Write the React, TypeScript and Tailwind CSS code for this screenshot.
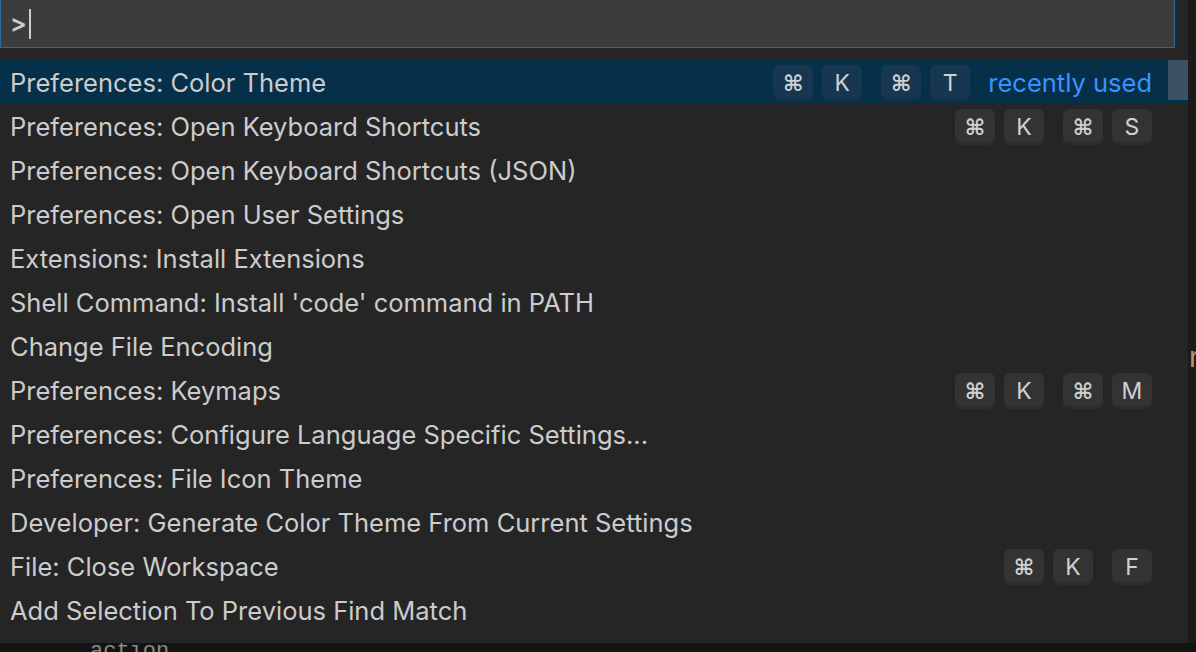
import React from "react";

type Item = {
  label: string;
  keys?: string[][];
  note?: string;
};

const items: Item[] = [
  { label: "Preferences: Color Theme", keys: [["⌘", "K"], ["⌘", "T"]], note: "recently used" },
  { label: "Preferences: Open Keyboard Shortcuts", keys: [["⌘", "K"], ["⌘", "S"]] },
  { label: "Preferences: Open Keyboard Shortcuts (JSON)" },
  { label: "Preferences: Open User Settings" },
  { label: "Extensions: Install Extensions" },
  { label: "Shell Command: Install 'code' command in PATH" },
  { label: "Change File Encoding" },
  { label: "Preferences: Keymaps", keys: [["⌘", "K"], ["⌘", "M"]] },
  { label: "Preferences: Configure Language Specific Settings..." },
  { label: "Preferences: File Icon Theme" },
  { label: "Developer: Generate Color Theme From Current Settings" },
  { label: "File: Close Workspace", keys: [["⌘", "K"], ["F"]] },
  { label: "Add Selection To Previous Find Match" },
];

function Key({ k, active }: { k: string; active: boolean }) {
  const sym = k === "⌘";
  return (
    <span
      className={`flex h-[36px] min-w-[40px] items-center justify-center rounded-[6px] px-[9px] text-[#d0d0d0] ${
        active
          ? "bg-[#16374f] shadow-[inset_0_-3px_0_#12304a]"
          : "bg-[#333334] shadow-[inset_0_-3px_0_#2c2c2d]"
      } ${sym ? "font-['DejaVu_Sans',sans-serif] text-[22px] font-bold" : "text-[23px]"}`}
    >
      {k}
    </span>
  );
}

function Row({ item, active }: { item: Item; active: boolean }) {
  return (
    <div
      className={`flex h-[44px] items-center pl-[10px] pr-[36px] pt-[2px] ${
        active ? "bg-[#062f4a]" : ""
      }`}
    >
      <span className="flex-1 whitespace-nowrap text-[25.5px] text-[#cccccc]">{item.label}</span>
      {item.keys && (
        <div className="flex items-center gap-[19px]">
          {item.keys.map((chord, i) => (
            <div key={i} className="flex items-center gap-[9px]">
              {chord.map((k, j) => (
                <Key key={j} k={k} active={active} />
              ))}
            </div>
          ))}
        </div>
      )}
      {item.note && (
        <span className="ml-[18px] whitespace-nowrap text-[25.5px] text-[#3794ff]">{item.note}</span>
      )}
    </div>
  );
}

export default function App() {
  return (
    <div className="flex h-[652px] w-[1196px] flex-col overflow-hidden bg-[#131313] font-['Inter',sans-serif]">
      <div className="flex h-[643px]">
        <div className="relative flex w-[1188px] flex-col bg-[#252526]">
          <div className="pr-[13px]">
            <div className="flex h-[48px] items-center border border-t-0 border-[#2b6a9a] bg-[#3c3c3c] pl-[9px]">
              <span className="text-[25px] font-semibold text-[#cccccc]">&gt;</span>
              <span className="ml-[2px] h-[30px] w-[2px] bg-[#cccccc]" />
            </div>
          </div>
          <div className="mt-[12px] flex flex-col">
            {items.map((it, i) => (
              <Row key={i} item={it} active={i === 0} />
            ))}
          </div>
          <div className="absolute right-0 top-[60px] h-[40px] w-[20px] bg-[#3b5164]" />
        </div>
        <div className="relative flex-1 overflow-hidden bg-[#1b1b1b]">
          <span className="absolute left-[1px] top-[342px] font-['Liberation_Sans',sans-serif] text-[30px] leading-none text-[#c08b6b]">
            r
          </span>
        </div>
      </div>
      <div className="relative flex-1 overflow-hidden">
        <span className="absolute left-[90px] top-[-2px] font-['Liberation_Mono',monospace] text-[22px] leading-none text-[#8a8a8a]">
          action
        </span>
      </div>
    </div>
  );
}
